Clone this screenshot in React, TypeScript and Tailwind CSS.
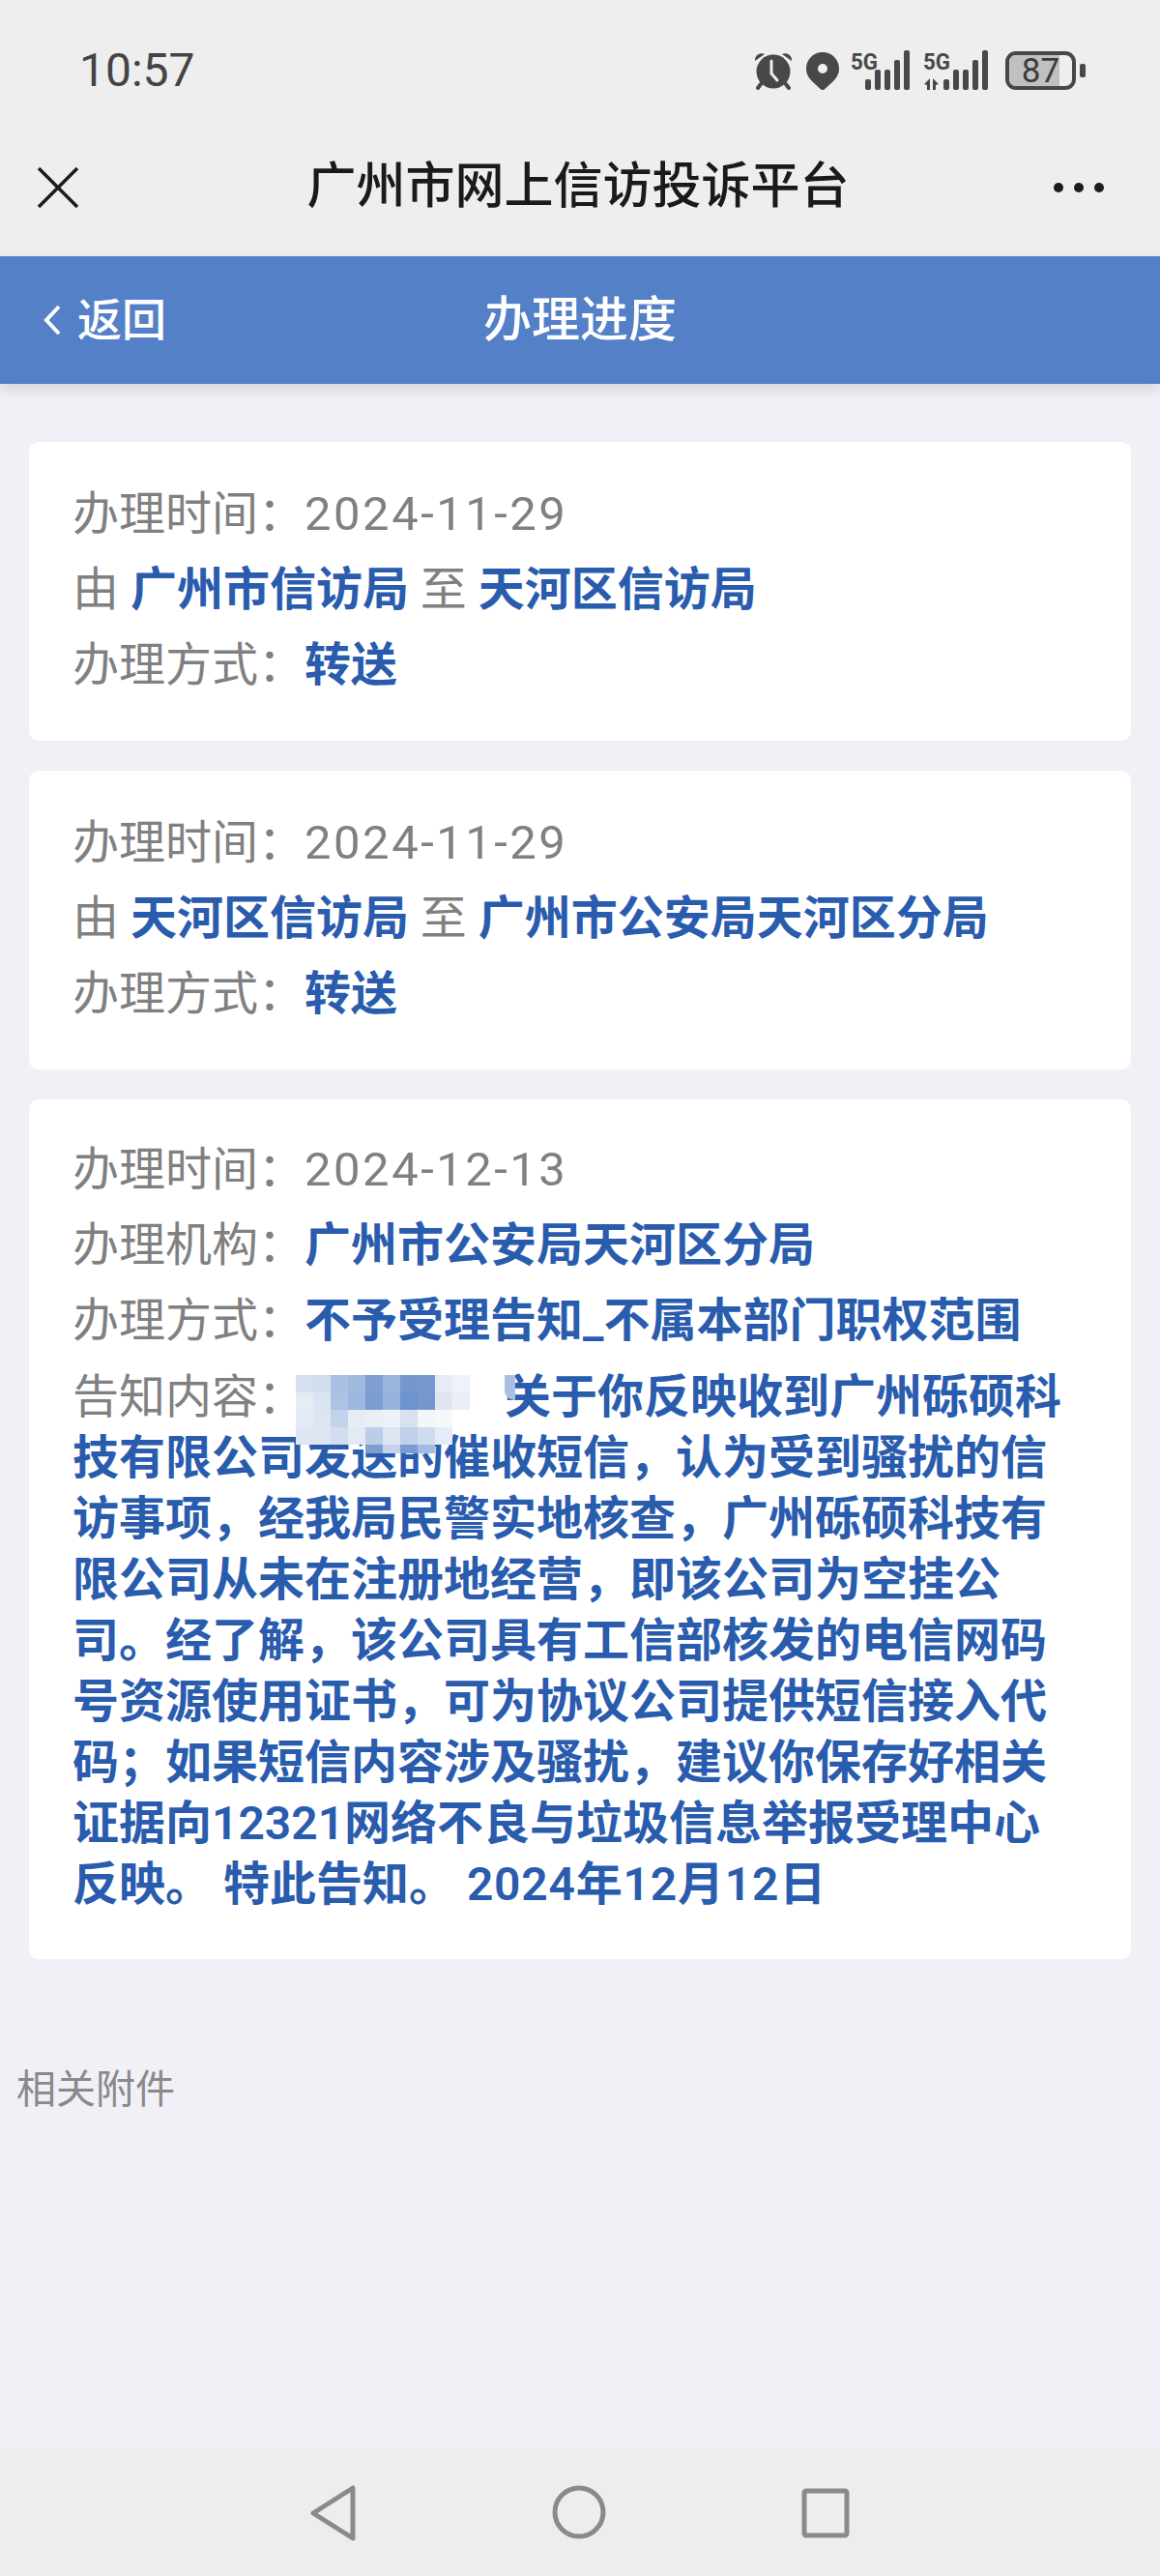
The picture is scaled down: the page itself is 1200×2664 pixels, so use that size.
const FONT = "font-['Roboto','Noto_Sans_CJK_SC',sans-serif]";

const mosaic = [
  ["bg-[#d5dff0]", "bg-[#d3ddef]", "bg-[#a9c0e2]", "bg-[#a0b9df]", "bg-[#7f9fd3]", "bg-[#9cb5dd]", "bg-[#7597d0]", "bg-[#7799d1]", "bg-[#e6ecf6]", "bg-[#eef2f9]"],
  ["bg-[#e6ecf6]", "bg-[#dbe4f2]", "bg-[#adc3e3]", "bg-[#9db7de]", "bg-[#7c9dd2]", "bg-[#98b2dc]", "bg-[#6f93ce]", "bg-[#7597d0]", "bg-[#dfe6f3]", "bg-[#eaeff7]"],
  ["bg-[#e4eaf5]", "bg-[#dde5f3]", "bg-[#c3d2ea]", "bg-[#e6ecf6]", "bg-[#e9eef7]", "bg-[#edf1f8]", "bg-[#d8e1f1]", "bg-[#f3f5fa]", "bg-[#f5f7fb]", "bg-white"],
  ["bg-[#dfe6f3]", "bg-[#dfe6f3]", "bg-[#d3ddef]", "bg-[#e3e9f5]", "bg-[#bccde8]", "bg-[#dde5f3]", "bg-[#c2d1ea]", "bg-[#cfdbee]", "bg-[#e6ecf6]", "bg-transparent"],
  ["bg-transparent", "bg-transparent", "bg-transparent", "bg-transparent", "bg-[#7f9fd3]", "bg-[#c5d3eb]", "bg-[#7b9cd2]", "bg-[#a3bbe0]", "bg-transparent", "bg-transparent"],
];

const noticeLines = [
  "技有限公司发送的催收短信，认为受到骚扰的信",
  "访事项，经我局民警实地核查，广州砾硕科技有",
  "限公司从未在注册地经营，即该公司为空挂公",
  "司。经了解，该公司具有工信部核发的电信网码",
  "号资源使用证书，可为协议公司提供短信接入代",
  "码；如果短信内容涉及骚扰，建议你保存好相关",
  "证据向12321网络不良与垃圾信息举报受理中心",
];

function Signal({ dual }: { dual?: boolean }) {
  const bars = [
    { x: 15, h: 11 },
    { x: 25, h: 21 },
    { x: 35, h: 21 },
    { x: 45, h: 31 },
    { x: 55, h: 41 },
  ];
  return (
    <svg width={dual ? 67 : 61} height="42" viewBox={dual ? "-6 0 67 42" : "0 0 61 42"} fill="#484848">
      {bars.map((b) => (
        <rect key={b.x} x={b.x} y={41 - b.h} width="6" height={b.h} rx="2" />
      ))}
      {dual && <path d="M-5 35l6-6v12h-3v-5zM4 29l6 6-3 1v5H4z" />}
      <text x={dual ? -6 : 0} y="20" fontSize="24" fontWeight="700" fontFamily="Roboto, sans-serif" textLength="28" lengthAdjust="spacingAndGlyphs">
        5G
      </text>
    </svg>
  );
}

function StatusIcons() {
  return (
    <div className="flex items-center">
      <svg width="40" height="40" viewBox="0 0 40 40" className="mr-[14px]">
        <path d="M1 10a7 7 0 0 1 10-7zM39 10a7 7 0 0 0-10-7z" fill="#484848" />
        <path d="M7 34l-3 4M33 34l3 4" stroke="#484848" strokeWidth="4" strokeLinecap="round" />
        <circle cx="20" cy="21" r="17.5" fill="#484848" />
        <path d="M18 10v13l6 7" stroke="#eeeeee" strokeWidth="3" fill="none" strokeLinecap="round" />
      </svg>
      <svg width="34" height="39" viewBox="0 0 34 39" className="mr-[12px]">
        <path
          fillRule="evenodd"
          d="M17 0C7.5 0 0 7.5 0 17c0 6 3 10 7 14l8 7.3c1.2 1 2.8 1 4 0l8-7.3c4-4 7-8 7-14C34 7.500 26.500 0 17 0zm0 12a5 5 0 1 1 0 10 5 5 0 0 1 0-10z"
          fill="#484848"
        />
      </svg>
      <div className="mr-[14px] flex">
        <Signal />
      </div>
      <div className="mr-[18px] flex">
        <Signal dual />
      </div>
      <div className="relative flex h-[40px] w-[73px] items-center justify-center overflow-hidden rounded-[11px] border-[4px] border-[#484848]">
        <div className="absolute inset-y-0 left-0 w-[52px] bg-[#c0c0c0]" />
        <span className="relative text-[35px] leading-none text-[#3c3c3c]">87</span>
      </div>
      <div className="ml-[4px] h-[14px] w-[6px] rounded-[2px] bg-[#484848]" />
    </div>
  );
}

function Row({ children }: { children: React.ReactNode }) {
  return <div className="h-[78px] leading-[78px] whitespace-nowrap text-[#808080]">{children}</div>;
}

function Blue({ children }: { children: React.ReactNode }) {
  return <span className="font-semibold text-[#2a5cae]">{children}</span>;
}

function DateText({ children }: { children: React.ReactNode }) {
  return <span className="text-[49px] tracking-[2.5px]">{children}</span>;
}

function Card({ children }: { children: React.ReactNode }) {
  return <div className="rounded-[10px] bg-white pt-[36px] pb-[39px] pl-[45px] text-[48px]">{children}</div>;
}

export default function App() {
  return (
    <div className={`flex min-h-screen flex-col bg-[#f0f0f6] ${FONT}`}>
      <div className="bg-[#eeeeee]">
        <div className="flex h-[130px] items-center justify-between pt-4 pr-[77px] pl-[82px]">
          <span className="text-[48px] text-[#444444]">10:57</span>
          <StatusIcons />
        </div>
        <div className="grid h-[135px] grid-cols-[1fr_auto_1fr] items-center pr-[42px] pb-2 pl-[38px]">
          <svg width="44" height="42" viewBox="0 0 44 42" stroke="#1c1c1c" strokeWidth="3.500">
            <path d="M2 1l40 40M42 1L2 41" />
          </svg>
          <span className="text-[51px] font-medium text-[#1a1a1a]">广州市网上信访投诉平台</span>
          <div className="mr-[16px] flex justify-end gap-[11px]">
            <span className="h-[10px] w-[10px] rounded-full bg-[#1c1c1c]" />
            <span className="h-[10px] w-[10px] rounded-full bg-[#1c1c1c]" />
            <span className="h-[10px] w-[10px] rounded-full bg-[#1c1c1c]" />
          </div>
        </div>
      </div>

      <div className="relative flex h-[132px] items-center justify-center bg-[#5480c8] text-white shadow-[0_6px_14px_rgba(0,0,0,0.12)]">
        <div className="absolute top-0 left-[45px] flex h-full items-center">
          <svg width="18" height="34" viewBox="0 0 18 34" fill="none" stroke="white" strokeWidth="4">
            <path d="M16 3L3 17l13 14" />
          </svg>
          <span className="ml-[17px] text-[46px] font-medium">返回</span>
        </div>
        <span className="text-[50px] font-medium">办理进度</span>
      </div>

      <div className="flex flex-col gap-[31px] px-[30px] pt-[60px]">
        <Card>
          <Row>
            办理时间：<DateText>2024-11-29</DateText>
          </Row>
          <Row>
            由 <Blue>广州市信访局</Blue> 至 <Blue>天河区信访局</Blue>
          </Row>
          <Row>
            办理方式：<Blue>转送</Blue>
          </Row>
        </Card>
        <Card>
          <Row>
            办理时间：<DateText>2024-11-29</DateText>
          </Row>
          <Row>
            由 <Blue>天河区信访局</Blue> 至 <Blue>广州市公安局天河区分局</Blue>
          </Row>
          <Row>
            办理方式：<Blue>转送</Blue>
          </Row>
        </Card>
        <div className="rounded-[10px] bg-white pt-[34px] pb-[46px] pl-[45px] text-[48px]">
          <Row>
            办理时间：<DateText>2024-12-13</DateText>
          </Row>
          <Row>
            办理机构：<Blue>广州市公安局天河区分局</Blue>
          </Row>
          <Row>
            办理方式：<Blue>不予受理告知_不属本部门职权范围</Blue>
          </Row>
          <div className="relative mt-[8px] leading-[63px] whitespace-nowrap text-[#808080]">
            <div>
              告知内容：<span className="inline-block w-[207px]" />
              <Blue>关于你反映收到广州砾硕科</Blue>
            </div>
            {noticeLines.map((line) => (
              <div key={line}>
                <Blue>{line}</Blue>
              </div>
            ))}
            <div>
              <Blue>
                反映。 特此告知。 <span className="tracking-[0.8px]">2024年12月12日</span>
              </Blue>
            </div>
            {/* mosaic over the blacked out name */}
            <div className="absolute top-[9px] left-[231px] grid w-[180px] grid-cols-10">
              {mosaic.flat().map((c, i) => (
                <div key={i} className={`${i >= 40 ? "h-[9px]" : "h-[18px]"} ${c}`} />
              ))}
            </div>
            <div className="absolute top-[9px] left-[447px] h-[26px] w-[11px] rounded-bl-[10px] bg-[#a9c0e2]" />
          </div>
        </div>
      </div>

      <div className="mt-[105px] pl-[17px] text-[41px] leading-[60px] text-[#8a8a8a]">相关附件</div>

      <div className="mt-auto flex h-[132px] items-start justify-between bg-[#ededed] pt-[38px] pr-[321px] pl-[321px]">
        <svg width="48" height="58" viewBox="0 0 48 58" fill="none" stroke="#8a8a8a" strokeWidth="5" strokeLinejoin="round">
          <path d="M44 3v52L3 29z" />
        </svg>
        <svg width="56" height="56" viewBox="0 0 56 56" fill="none" stroke="#8a8a8a" strokeWidth="5">
          <circle cx="28" cy="28" r="25" />
        </svg>
        <svg width="50" height="52" viewBox="0 0 50 52" fill="none" stroke="#8a8a8a" strokeWidth="5" strokeLinejoin="round" className="mt-[3px]">
          <rect x="3" y="3" width="44" height="46" rx="2" />
        </svg>
      </div>
    </div>
  );
}
